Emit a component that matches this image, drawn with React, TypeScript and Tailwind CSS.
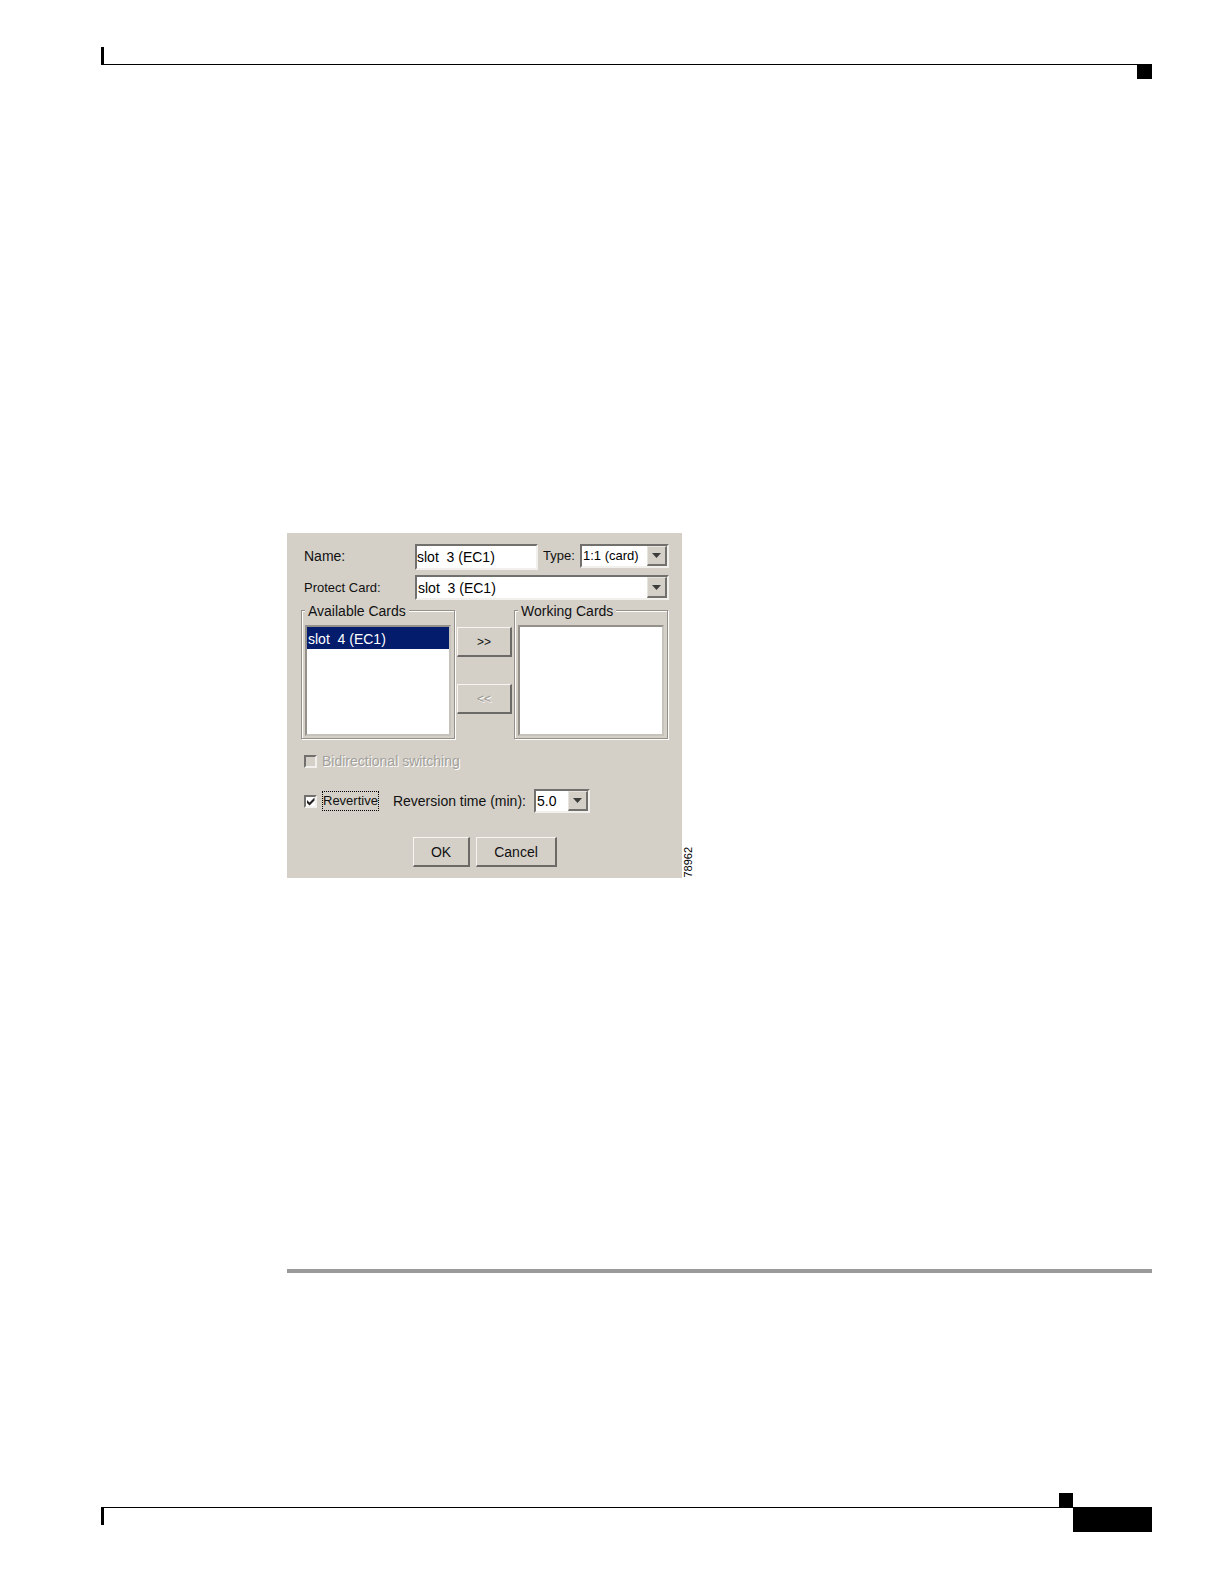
import { useState } from "react";
import type { ReactNode, SelectHTMLAttributes } from "react";
import clsx from "clsx";

const SLOT_3 = "slot\u00a0 3 (EC1)";
const SLOT_4 = "slot\u00a0 4 (EC1)";

interface DropDownProps extends SelectHTMLAttributes<HTMLSelectElement> {
  options: string[];
  className?: string;
}

function DropDown({ options, className, ...props }: DropDownProps) {
  return (
    <div
      className={clsx(
        "flex border-2 border-t-[#72706c] border-l-[#72706c] border-r-[#f1f0ec] border-b-[#f1f0ec] bg-white",
        className
      )}
    >
      <div className="grid min-w-0 flex-1 grid-cols-1">
        <select
          {...props}
          className="col-start-1 row-start-1 w-full appearance-none bg-transparent pl-px text-black outline-none"
        >
          {options.map((option) => (
            <option key={option}>{option}</option>
          ))}
        </select>
        <span className="pointer-events-none col-start-1 row-start-1 flex w-5 items-center justify-center justify-self-end border border-r-2 border-b-2 border-t-[#e6e4de] border-l-[#e6e4de] border-r-[#72706c] border-b-[#72706c] bg-[#d4d0c8]">
          <svg width="9" height="5" viewBox="0 0 9 5" aria-hidden="true">
            <path d="M0 0h9L4.5 5z" fill="#3c3c3a" />
          </svg>
        </span>
      </div>
    </div>
  );
}

interface PushButtonProps {
  children: ReactNode;
  className?: string;
  disabled?: boolean;
  label?: string;
  onClick?: () => void;
}

function PushButton({ children, className, disabled, label, onClick }: PushButtonProps) {
  return (
    <button
      type="button"
      aria-label={label}
      disabled={disabled}
      onClick={onClick}
      className={clsx(
        "h-[30px] border border-r-2 border-b-2 border-t-[#f6f5f2] border-l-[#f6f5f2] border-r-[#6c6a66] border-b-[#6c6a66] bg-[#d4d0c8]",
        disabled ? "text-[#9b9892] [text-shadow:1px_1px_0_#fff]" : "text-[#111]",
        className
      )}
    >
      {children}
    </button>
  );
}

interface CardListProps {
  title: string;
  cards: string[];
  selected?: string;
}

function CardList({ title, cards, selected }: CardListProps) {
  return (
    <fieldset className="w-[154px] border border-[#94918b] px-[3px] pt-[6px] pb-[2px] shadow-[1px_1px_0_#fff,inset_1px_1px_0_#fff]">
      <legend className="bg-[#d4d0c8] px-[3px] pt-[2px] leading-4">{title}</legend>
      <ul
        role="listbox"
        aria-label={title}
        className="h-[111px] border-2 border-t-[#94918b] border-l-[#94918b] border-r-[#c6c3bc] border-b-[#c6c3bc] bg-white"
      >
        {cards.map((card) => (
          <li
            key={card}
            role="option"
            aria-selected={card === selected}
            className={clsx("px-px pt-[2px] leading-5", card === selected && "bg-[#041c6c] text-white")}
          >
            {card}
          </li>
        ))}
      </ul>
    </fieldset>
  );
}

const checkboxClass =
  "grid size-[13px] shrink-0 appearance-none place-items-center border-2 border-t-[#72706c] border-l-[#72706c] border-r-[#f1f0ec] border-b-[#f1f0ec] outline-none col-start-1 row-start-1";

function ProtectionGroupDialog() {
  const [name, setName] = useState(SLOT_3);
  const [revertive, setRevertive] = useState(true);

  return (
    <form className="w-[395px] bg-[#d4d0c8] pt-[11px] pr-[13px] pb-[11px] pl-[14px] font-['Liberation_Sans',Arial,sans-serif] text-sm text-[#111]">
      <div className="flex h-[26px] items-start">
        <label htmlFor="name" className="w-[114px] pl-[3px] leading-6">
          Name:
        </label>
        <input
          id="name"
          type="text"
          value={name}
          onChange={(e) => setName(e.target.value)}
          className="h-[26px] w-[123px] border-2 border-t-[#72706c] border-l-[#72706c] border-r-[#f1f0ec] border-b-[#f1f0ec] bg-white text-black outline-none"
        />
        <label htmlFor="type" className="pl-[5px] text-[13px] leading-6">
          Type:
        </label>
        <DropDown id="type" options={["1:1 (card)"]} className="ml-auto h-6 w-[89px] text-[13px]" />
      </div>

      <div className="mt-[5px] flex h-[25px]">
        <label htmlFor="protect" className="w-[114px] pl-[3px] text-[13px] leading-[26px]">
          Protect Card:
        </label>
        <DropDown id="protect" options={[SLOT_3]} className="flex-1" />
      </div>

      {/* Card transfer */}
      <div className="mt-px flex gap-[2px]">
        <CardList title="Available Cards" cards={[SLOT_4]} selected={SLOT_4} />
        <div className="flex w-[55px] flex-col gap-[27px] pt-[26px] text-xs">
          <PushButton label="Add card">&gt;&gt;</PushButton>
          <PushButton label="Remove card" disabled>
            &lt;&lt;
          </PushButton>
        </div>
        <CardList title="Working Cards" cards={[]} />
      </div>

      <div className="mt-3 flex h-5 items-center gap-[5px] pl-[3px]">
        <input id="bidirectional" type="checkbox" disabled className={checkboxClass} />
        <label htmlFor="bidirectional" className="text-[#a3a09a] [text-shadow:1px_1px_0_#fff]">
          Bidirectional switching
        </label>
      </div>

      <div className="mt-[18px] flex h-6 items-center pl-[3px]">
        <div className="grid">
          <input
            id="revertive"
            type="checkbox"
            checked={revertive}
            onChange={(e) => setRevertive(e.target.checked)}
            className={clsx(checkboxClass, "bg-white")}
          />
          {revertive && (
            <svg
              width="13"
              height="13"
              viewBox="0 0 13 13"
              aria-hidden="true"
              className="pointer-events-none col-start-1 row-start-1"
            >
              <path d="M3 5v3l2.500 2.500L10.500 5.500V2.500L5.500 7.500z" fill="#222" />
            </svg>
          )}
        </div>
        <label
          htmlFor="revertive"
          className="ml-[5px] border border-dotted border-black text-[13px] leading-[18px]"
        >
          Revertive
        </label>
        <label htmlFor="reversion" className="ml-[14px]">
          Reversion time (min):
        </label>
        <DropDown id="reversion" options={["5.0"]} className="ml-2 h-6 w-14" />
      </div>

      <div className="mt-6 flex justify-center gap-[6px]">
        <PushButton className="w-[57px]">OK</PushButton>
        <PushButton className="w-[81px]">Cancel</PushButton>
      </div>
    </form>
  );
}

export default function App() {
  return (
    <div className="flex min-h-screen flex-col bg-white pt-[47px] pr-[70px] pb-[52px] pl-[101px]">
      <header>
        <div className="h-[17px] w-[3px] bg-black" />
        <div className="flex justify-between">
          <div className="h-px flex-1 bg-black" />
          <div className="size-[15px] bg-black" />
        </div>
      </header>

      <main className="flex-1 pt-[454px] pl-[186px]">
        <figure className="flex items-end">
          <ProtectionGroupDialog />
          <figcaption className="rotate-180 font-['Liberation_Sans_Narrow','Liberation_Sans',sans-serif] text-[11px] leading-3 text-black [writing-mode:vertical-rl]">
            78962
          </figcaption>
        </figure>
        <hr className="mt-[391px] h-1 border-0 bg-[#9a9a9a]" />
      </main>

      <footer>
        <div className="flex justify-end pr-[79px]">
          <div className="size-[14px] bg-black" />
        </div>
        <div className="flex">
          <div className="h-[18px] w-[3px] bg-black" />
          <div className="h-px flex-1 bg-black" />
          <div className="h-[25px] w-[79px] bg-black" />
        </div>
      </footer>
    </div>
  );
}
